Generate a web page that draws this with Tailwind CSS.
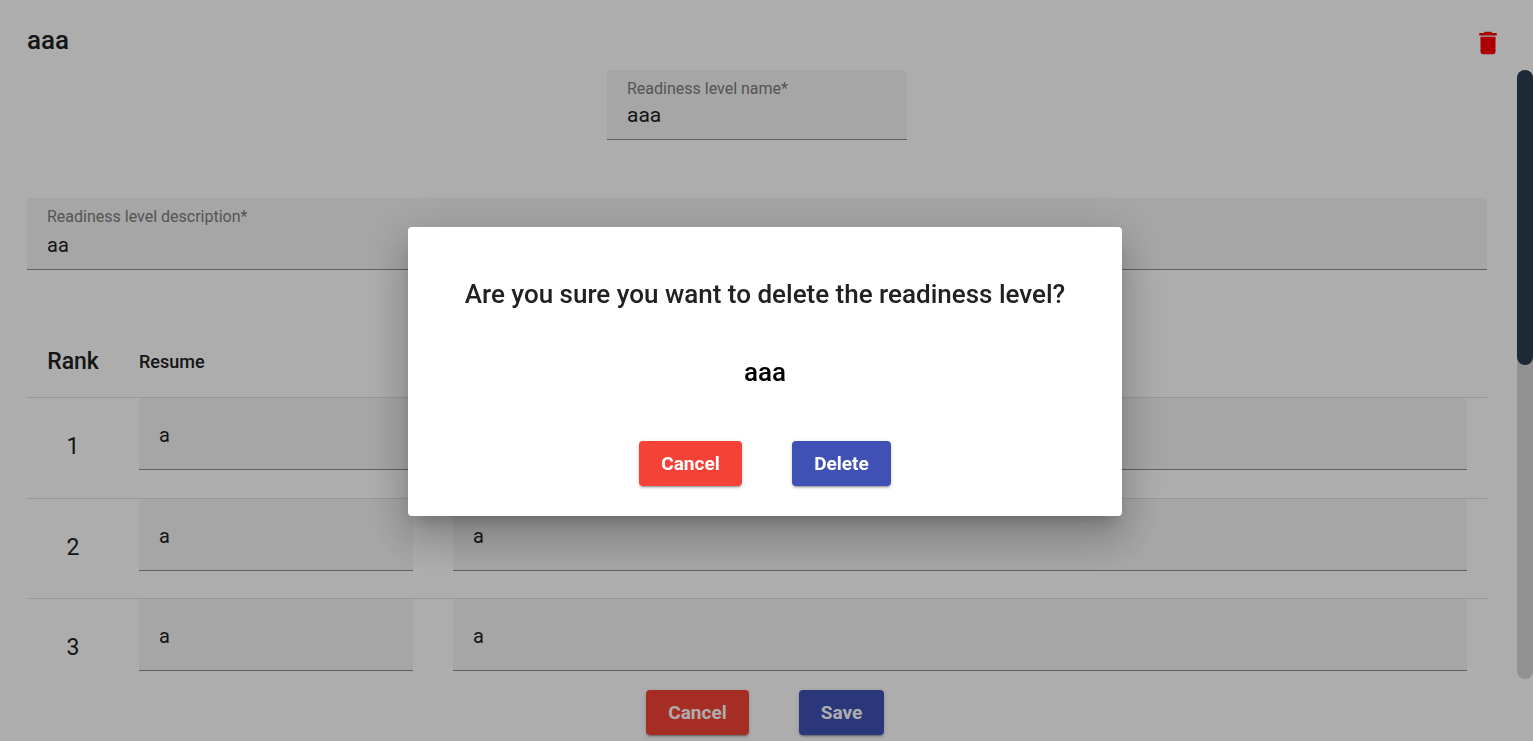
<!DOCTYPE html>
<html lang="en">
<head>
<meta charset="utf-8">
<meta name="viewport" content="width=device-width, initial-scale=1">
<title>Readiness level</title>
<script src="https://cdn.jsdelivr.net/npm/@tailwindcss/browser@4"></script>
</head>
<body class="bg-white font-[Roboto,sans-serif] text-[#212121]">
<div class="flex h-screen flex-col overflow-hidden">
  <header class="flex h-[70px] shrink-0 items-start justify-between pt-6 pr-[30px] pl-[27px]">
    <h1 class="text-[26px] leading-8 font-medium">aaa</h1>
    <button type="button" aria-label="Delete readiness level" class="mt-1 text-[#ff0000]">
      <svg class="size-[30px]" viewBox="0 0 24 24" fill="currentColor" aria-hidden="true"><path d="M6 19c0 1.1.9 2 2 2h8c1.1 0 2-.9 2-2V7H6v12zM19 4h-3.5l-1-1h-5l-1 1H5v2h14V4z"/></svg>
    </button>
  </header>

  <div class="flex min-h-0 flex-1">
    <main class="min-w-0 flex-1 overflow-hidden pr-[30px] pl-[27px]">
      <div class="mx-auto flex h-[70px] w-[300px] flex-col rounded-t border-b border-[#8e8e8e] bg-[#f5f5f5] px-5 pt-[9px]">
        <label for="name" class="text-[16px] leading-5 text-[#7c7c7c]">Readiness level name*</label>
        <input id="name" type="text" value="aaa" class="h-8 w-full bg-transparent text-[21px] outline-none">
      </div>
      <div class="mt-[58px] flex h-[72px] flex-col rounded-t border-b border-[#8e8e8e] bg-[#f5f5f5] px-5 pt-[9px]">
        <label for="description" class="text-[16px] leading-5 text-[#7c7c7c]">Readiness level description*</label>
        <textarea id="description" rows="1" class="mt-0.5 h-8 w-full resize-none bg-transparent text-[20px] leading-8 outline-none">aa</textarea>
      </div>

      <table class="mt-[58px] w-full table-fixed border-collapse">
        <colgroup><col class="w-[92px]"><col class="w-[314px]"><col></colgroup>
        <thead>
          <tr class="h-[69px] border-b border-[#e0e0e0]">
            <th scope="col" class="text-center text-[23px] font-medium">Rank</th>
            <th scope="col" class="px-5 text-left text-lg font-medium">Resume</th>
            <td></td>
          </tr>
        </thead>
        <tbody>
          <tr class="h-[101px] border-b border-[#e0e0e0]">
            <td class="text-center text-[23px]">1</td>
            <td class="px-5 align-top"><input type="text" aria-label="Resume, rank 1" value="a" class="block h-[72px] w-full rounded-t border-b border-[#8e8e8e] bg-[#f5f5f5] px-5 pt-1 text-[20px] outline-none"></td>
            <td class="px-5 align-top"><input type="text" aria-label="Description, rank 1" value="a" class="block h-[72px] w-full rounded-t border-b border-[#8e8e8e] bg-[#f5f5f5] px-5 pt-1 text-[20px] outline-none"></td>
          </tr>
          <tr class="h-[100px] border-b border-[#e0e0e0]">
            <td class="text-center text-[23px]">2</td>
            <td class="px-5 align-top"><input type="text" aria-label="Resume, rank 2" value="a" class="block h-[72px] w-full rounded-t border-b border-[#8e8e8e] bg-[#f5f5f5] px-5 pt-1 text-[20px] outline-none"></td>
            <td class="px-5 align-top"><input type="text" aria-label="Description, rank 2" value="a" class="block h-[72px] w-full rounded-t border-b border-[#8e8e8e] bg-[#f5f5f5] px-5 pt-1 text-[20px] outline-none"></td>
          </tr>
          <tr class="h-[101px] border-b border-[#e0e0e0]">
            <td class="text-center text-[23px]">3</td>
            <td class="px-5 align-top"><input type="text" aria-label="Resume, rank 3" value="a" class="block h-[72px] w-full rounded-t border-b border-[#8e8e8e] bg-[#f5f5f5] px-5 pt-1 text-[20px] outline-none"></td>
            <td class="px-5 align-top"><input type="text" aria-label="Description, rank 3" value="a" class="block h-[72px] w-full rounded-t border-b border-[#8e8e8e] bg-[#f5f5f5] px-5 pt-1 text-[20px] outline-none"></td>
          </tr>
        </tbody>
      </table>
    </main>
    <div class="w-4 shrink-0 rounded-full bg-[#d6d6d6]" aria-hidden="true">
      <div class="h-[295px] rounded-full bg-[#2c3e50]"></div>
    </div>
  </div>

  <footer class="flex h-[62px] shrink-0 items-start justify-center gap-[50px] pt-[11px] pr-[3px] text-[19px] font-bold text-white">
    <button type="button" class="h-[45px] w-[103px] rounded bg-[#f44336] pt-0.5 shadow-[0_3px_1px_-2px_rgba(0,0,0,0.2),0_2px_2px_0_rgba(0,0,0,0.14),0_1px_5px_0_rgba(0,0,0,0.12)]">Cancel</button>
    <button type="button" class="h-[45px] w-[85px] rounded bg-[#3f51b5] pt-0.5 shadow-[0_3px_1px_-2px_rgba(0,0,0,0.2),0_2px_2px_0_rgba(0,0,0,0.14),0_1px_5px_0_rgba(0,0,0,0.12)]">Save</button>
  </footer>
</div>

<div class="fixed inset-0 flex items-center justify-center bg-black/32 pt-px pr-[3px]">
  <section role="dialog" aria-modal="true" aria-labelledby="dialog-title" class="flex w-full max-w-[714px] flex-col items-center rounded bg-white px-5 pt-[51px] pb-[30px] shadow-[0_11px_15px_-7px_rgba(0,0,0,0.2),0_24px_38px_3px_rgba(0,0,0,0.14),0_9px_46px_8px_rgba(0,0,0,0.12)]">
    <h2 id="dialog-title" class="text-[26px] leading-8 font-medium">Are you sure you want to delete the readiness level?</h2>
    <p class="mt-[46px] text-[26px] leading-8 font-medium text-black">aaa</p>
    <div class="mt-[53px] flex gap-[50px] text-[19px] font-bold text-white">
      <button type="button" class="h-[45px] w-[103px] rounded bg-[#f44336] pt-0.5 shadow-[0_3px_1px_-2px_rgba(0,0,0,0.2),0_2px_2px_0_rgba(0,0,0,0.14),0_1px_5px_0_rgba(0,0,0,0.12)]">Cancel</button>
      <button type="button" class="h-[45px] w-[99px] rounded bg-[#3f51b5] pt-0.5 shadow-[0_3px_1px_-2px_rgba(0,0,0,0.2),0_2px_2px_0_rgba(0,0,0,0.14),0_1px_5px_0_rgba(0,0,0,0.12)]">Delete</button>
    </div>
  </section>
</div>
</body>
</html>
